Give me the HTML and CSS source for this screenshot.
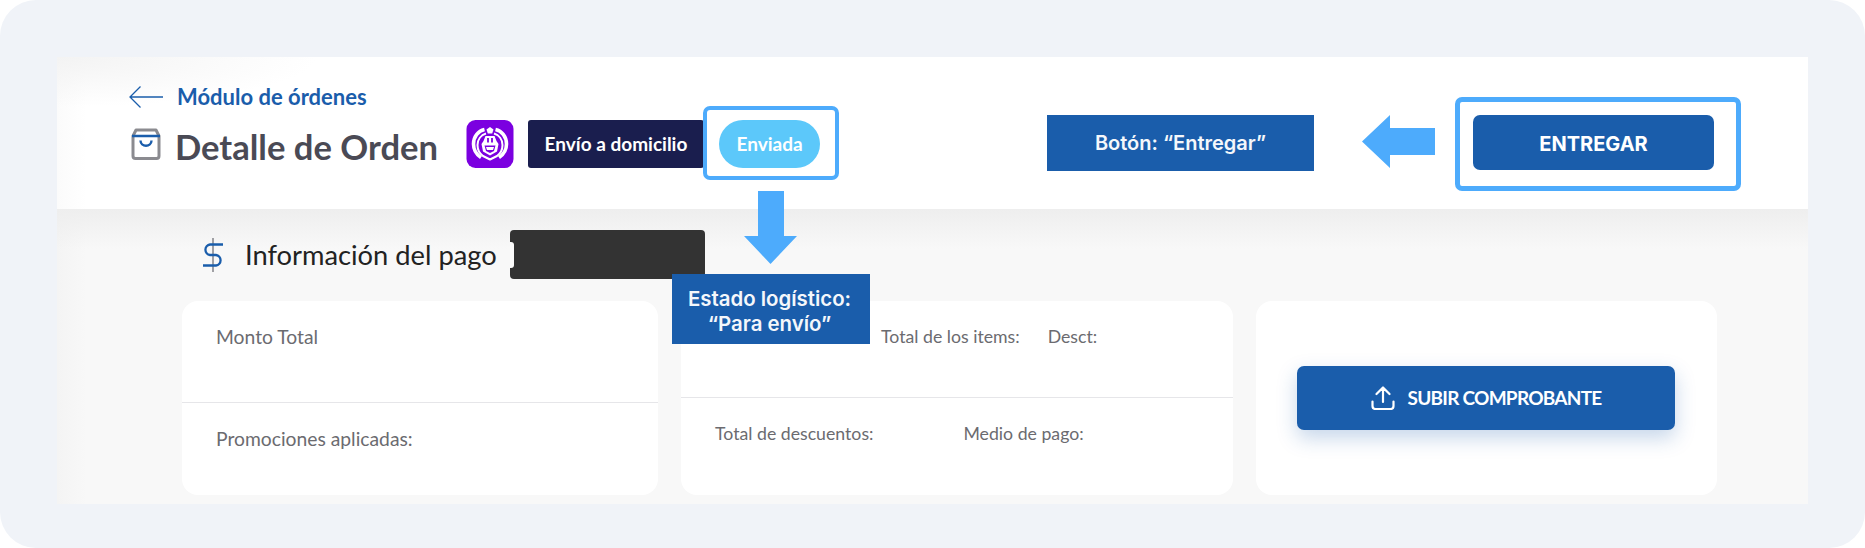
FILE: index.html
```html
<!DOCTYPE html>
<html lang="es">
<head>
<meta charset="utf-8">
<title>Detalle de Orden</title>
<link rel="stylesheet" href="styles.css">
</head>
<body>
<div class="page">
  <main class="panel">
    <header class="header">
      <div class="head-main">
        <a class="back-link">
          <svg class="back-icon" width="34" height="22" viewBox="0 0 34 22" fill="none"><path d="M11.500 .5 1 11l10.500 10.500M1 11h33" stroke="#1a5dab" stroke-width="1.300"/></svg>
          <span class="back-text">Módulo de órdenes</span>
        </a>
        <div class="title-row">
          <svg class="bag-icon" width="30" height="32" viewBox="0 0 30 32" fill="none">
            <path d="M2 8 5 2h20l3 6v20a2.500 2.500 0 0 1-2.500 2.500h-21A2.500 2.500 0 0 1 2 28z" stroke="#8b8b90" stroke-width="3" stroke-linejoin="round"/>
            <path d="M1 8h28" stroke="#1a5dab" stroke-width="2.400"/>
            <path d="M9.500 12.500c0 7 11 7 11 0" stroke="#1a5dab" stroke-width="2.400"/>
          </svg>
          <h1 class="title">Detalle de Orden</h1>
          <svg class="logo" width="48" height="48" viewBox="0 0 48 48">
            <rect width="47" height="48" x=".5" rx="9" fill="#7b00e0"/>
            <path d="M24 7l3.500 2.500-1.300 4h-4.400l-1.300-4z" fill="#fff"/>
            <g fill="none" stroke="#fff" stroke-linejoin="round">
              <path d="M18.500 9.500C12 11 7.500 17 7.500 24c0 5.500 3 10.500 7.500 13.500M29.500 9.500C36 11 40.500 17 40.500 24c0 5.500-3 10.500-7.500 13.500" stroke-width="3.600"/>
              <path d="M20 13.500C15 15 11.500 19.500 11.500 25c0 4.500 2 8.500 5.500 11l7 3.500 7-3.500c3.500-2.500 5.500-6.500 5.500-11 0-5.500-3.500-10-8.500-11.500" stroke-width="2"/>
            </g>
            <path d="M19.500 16h9l2 5 2 3-1.500 7.500L24 35.500l-7-4L15.500 24l2-3z" fill="#fff"/>
            <path d="M18.500 25.500h11L28 31l-4 2-4-2z" fill="#7b00e0"/>
            <path d="M20 27h8l-1 3h-6z" fill="#fff"/>
            <path d="M22 18v4.500M26 18v4.500" stroke="#7b00e0" stroke-width="1.800"/>
          </svg>
          <span class="chip chip-delivery"><span class="chip-text">Envío a domicilio</span></span>
          <span class="chip chip-status"><span class="chip-text">Enviada</span></span>
        </div>
      </div>
      <button class="deliver-btn" type="button">ENTREGAR</button>

      <div class="mark mark-status"></div>
      <svg class="arrow arrow-down" width="53" height="73" viewBox="0 0 53 73"><path d="M14 0h26v45h13L26.500 73 0 45h14z" fill="#4dabfc"/></svg>
      <div class="note note-status">Estado logístico:<br>“Para envío”</div>
      <div class="note note-deliver">Botón: “Entregar”</div>
      <svg class="arrow arrow-left" width="73" height="53" viewBox="0 0 73 53"><path d="M73 13v27H28v13L0 26.500 28 0v13z" fill="#4dabfc"/></svg>
      <div class="mark mark-deliver"></div>
    </header>

    <section class="content">
      <div class="section-head">
        <svg class="dollar-icon" width="20" height="34" viewBox="0 0 20 34" fill="none">
          <path d="M10 0v34" stroke="#8b8b90" stroke-width="1.600"/>
          <path d="M20 6.500H7a5.300 5.300 0 0 0 0 10.500h6a5.300 5.300 0 0 1 0 10.500H0" stroke="#1a5dab" stroke-width="2.300"/>
        </svg>
        <h2 class="section-title">Información del pago</h2>
        <div class="redacted"></div>
      </div>
      <div class="cards">
        <article class="card card-total">
          <div class="card-row row-top"><span class="label">Monto Total</span></div>
          <div class="card-row row-bottom"><span class="label">Promociones aplicadas:</span></div>
        </article>
        <article class="card card-items">
          <div class="card-row row-top row-items"><span class="label">Total de los items:</span><span class="label">Desct:</span></div>
          <div class="card-row row-bottom row-pay"><span class="label">Total de descuentos:</span><span class="label">Medio de pago:</span></div>
        </article>
        <article class="card card-upload">
          <button class="upload-btn" type="button">
            <svg width="24" height="24" viewBox="0 0 24 24" fill="none"><path d="M12 16V2M5.500 8 12 1.500 18.500 8M1.500 15.500V20a3 3 0 0 0 3 3h15a3 3 0 0 0 3-3v-4.500" stroke="#fff" stroke-width="2.200" stroke-linecap="round" stroke-linejoin="round"/></svg>
            <span class="upload-text">SUBIR COMPROBANTE</span>
          </button>
        </article>
      </div>
    </section>
  </main>
</div>
</body>
</html>
```

FILE: styles.css
```css
* { box-sizing: border-box; }

html, body {
  margin: 0;
  background: #fff;
}

.page {
  width: 1865px;
  height: 548px;
  padding: 57px 57px 44px;
  background: #f0f3f8;
  border-radius: 36px;
  font-family: Lato, "Liberation Sans", sans-serif;
  overflow: hidden;
}

.panel {
  width: 1751px;
  height: 447px;
  background: #f8f8f8;
}

.header {
  position: relative;
  z-index: 1;
  display: flex;
  justify-content: space-between;
  align-items: flex-start;
  height: 152px;
  padding: 29px 94px 0 72px;
  background:
    radial-gradient(ellipse 260px 50px at 0 0, #f3f3f3 0%, rgba(255, 255, 255, 0) 100%),
    linear-gradient(90deg, #fbfbfb 0, #fff 30px);
  background-color: #fff;
}

.back-link {
  display: flex;
  align-items: center;
  gap: 14px;
  height: 22px;
  color: #1a5dab;
  font-size: 22px;
  font-weight: 700;
  margin-bottom: 12px;
}

.back-icon { flex: none; }
.back-text { margin-top: -2px; }

.title-row {
  display: flex;
  align-items: center;
  height: 48px;
}

.bag-icon {
  flex: none;
  margin: 0 14px 0 2px;
}

.title {
  margin: 0 28px 0 0;
  padding-top: 4px;
  color: #4a4a55;
  font-size: 34.600px;
  font-weight: 700;
  white-space: nowrap;
}

.logo { flex: none; margin-right: 14px; }

.chip {
  display: flex;
  align-items: center;
  justify-content: center;
  height: 48px;
  color: #fff;
  font-size: 19px;
  font-weight: 700;
  white-space: nowrap;
}

.chip-text { margin-top: -2px; }

.chip-delivery {
  width: 176px;
  margin-right: 15px;
  background: #1a1e4e;
  border-radius: 3px;
}

.chip-status {
  width: 101px;
  background: #5cc8fa;
  border-radius: 24px;
}

.deliver-btn {
  width: 241px;
  height: 55px;
  margin-top: 29px;
  padding: 2px 0 0;
  border: 0;
  border-radius: 7px;
  background: #1a5dab;
  color: #fff;
  font-family: Inter, sans-serif;
  font-size: 20px;
  font-weight: 700;
}

.mark {
  position: absolute;
  border: 4px solid #4dabfc;
  border-radius: 7px;
}

.mark-status { left: 646px; top: 49px; width: 136px; height: 74px; }
.mark-deliver { left: 1398px; top: 40px; width: 286px; height: 94px; border-width: 5px; }

.arrow { position: absolute; }
.arrow-down { left: 687px; top: 134px; }
.arrow-left { left: 1305px; top: 58px; }

.note {
  position: absolute;
  display: flex;
  align-items: center;
  justify-content: center;
  background: #1a5dab;
  color: #f4f7fb;
  font-family: Inter, sans-serif;
  font-size: 20px;
  font-weight: 600;
  text-align: center;
}

.note-status {
  left: 615px;
  top: 217px;
  width: 198px;
  height: 70px;
  padding: 3px 3px 0 0;
  font-size: 20.400px;
  line-height: 25px;
}

.note-deliver { left: 990px; top: 58px; width: 267px; height: 56px; }

.content {
  height: 295px;
  padding: 21px 91px 0 125px;
  background:
    linear-gradient(180deg, #eeeeee 0, rgba(248, 248, 248, 0) 40px),
    linear-gradient(90deg, #f4f4f4 0, #f8f8f8 30px);
}

.section-head {
  display: flex;
  align-items: center;
  height: 49px;
  padding-left: 21px;
  margin-bottom: 22px;
}

.dollar-icon { flex: none; margin-right: 22px; }

.section-title {
  margin: 0 13px 0 0;
  color: #222;
  font-size: 27.300px;
  font-weight: 400;
  white-space: nowrap;
}

.redacted {
  position: relative;
  width: 195px;
  height: 49px;
  background: #333;
  border-radius: 4px;
}

.redacted::before {
  content: "";
  position: absolute;
  left: 0;
  top: 12px;
  width: 4px;
  height: 26px;
  background: #fdfdfd;
  border-radius: 0 3px 3px 0;
}

.cards {
  display: flex;
  gap: 23px;
}

.card {
  height: 194px;
  background: #fff;
  border-radius: 16px;
}

.card-total { width: 476px; }
.card-items { width: 552px; }
.card-upload {
  display: flex;
  align-items: center;
  justify-content: center;
  width: 461px;
}

.card-row {
  display: flex;
  padding-left: 34px;
}

.row-top {
  height: 102px;
  padding-top: 25px;
  border-bottom: 1px solid #e6e6e9;
}

.row-bottom { padding-top: 25px; }

.row-items {
  height: 97px;
  padding-left: 200px;
  gap: 28px;
}

.row-pay { padding-left: 34px; padding-top: 25px; gap: 90px; }

.label {
  color: #6b6b70;
  font-size: 19.300px;
  line-height: 22px;
  white-space: nowrap;
}

.row-items .label,
.row-pay .label {
  font-size: 17.700px;
}

.upload-btn {
  display: flex;
  align-items: center;
  justify-content: center;
  gap: 13px;
  width: 378px;
  height: 64px;
  margin-left: -1px;
  border: 0;
  border-radius: 7px;
  background: #1a5dab;
  box-shadow: 0 8px 20px rgba(26, 93, 171, .25);
  color: #fff;
  font-family: Lato, sans-serif;
  font-size: 19px;
  font-weight: 700;
  letter-spacing: -.75px;
}

.upload-text { margin-top: -2px; }
```
